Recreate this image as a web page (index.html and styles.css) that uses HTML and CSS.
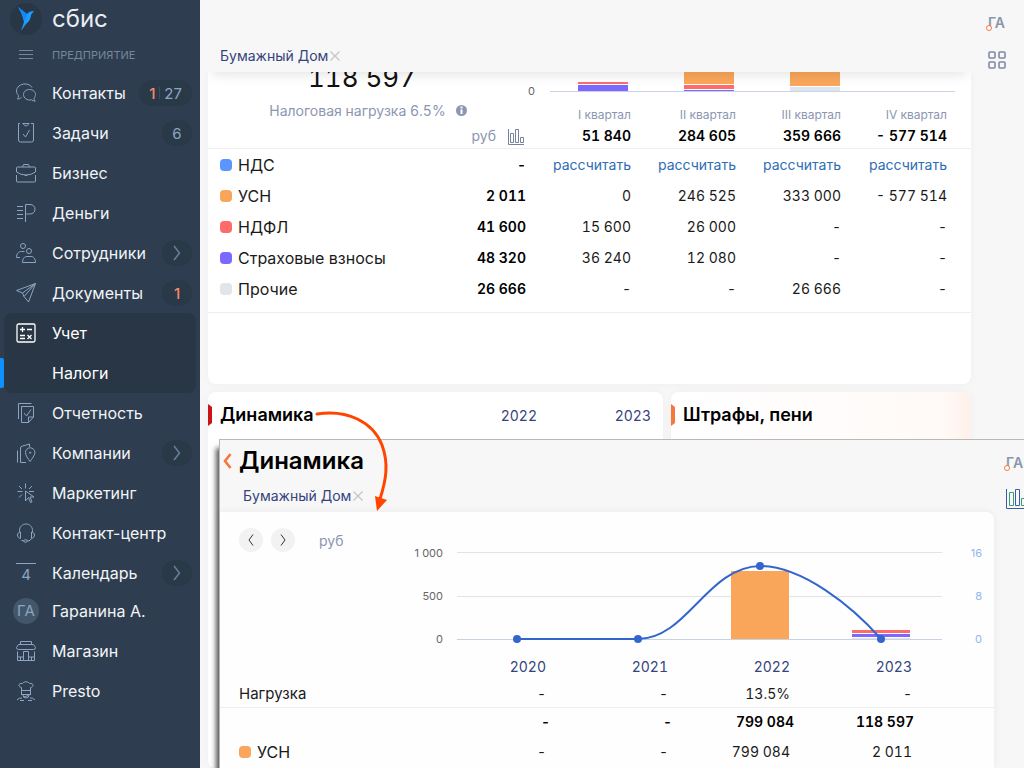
FILE: index.html
```html
<!DOCTYPE html>
<html lang="ru">
<head>
<meta charset="utf-8">
<meta name="viewport" content="width=device-width, initial-scale=1">
<title>СБИС — Налоги</title>
<link rel="stylesheet" href="styles.css">
</head>
<body>
<div class="app">
  <aside class="sidebar">
    <div class="brand">
      <span class="brand-mark">
        <svg width="20" height="26" viewBox="0 0 20 26"><path fill="#1e9bff" d="M2 1 11 8Q13 5 18 5L15 9Q15 14 10 18L5 25 8 16Q6 7 2 1Z"/><path fill="#0d8af8" d="M2 1 11 8 9 15Q6 7 2 1Z"/></svg>
      </span>
      <span class="brand-name">сбис</span>
    </div>
    <div class="section">
      <button class="menu-btn" aria-label="Меню"><svg class="ico" width="20" height="20" viewBox="0 0 20 20"><path d="M3 5.500h14M3 9.500h14M3 13.500h14"/></svg></button>
      <span class="section-name">ПРЕДПРИЯТИЕ</span>
    </div>
    <nav class="nav">
      <a class="item" href="#"><svg class="ico" width="20" height="20" viewBox="0 0 20 20"><path d="M16 4.500C14.500 2 12 1 9 1 4.500 1 .5 4 .5 8c0 2 1 3.500 2 4.500 0 1.500-.3 2.500-1 3.500 1.500 0 3-.5 4-1.500"/><path d="M13.500 6.500c3.500 0 6 2.200 6 5 0 1.500-.7 2.800-1.500 3.700 0 1.300.4 2.300 1.200 3-1.500 0-2.700-.5-3.700-1.400-4.500 1-8-1.700-8-5.300 0-2.800 2.500-5 6-5z"/></svg><span class="label">Контакты</span><span class="badge"><b class="hot">1</b><i class="bar"></i>27</span></a>
      <a class="item" href="#"><svg class="ico" width="20" height="20" viewBox="0 0 20 20"><path d="M4 .5H2.500v16.500q0 2 2 2h11q2 0 2-2V.5H15M6.500 .5h7M7.500 .5c0 3 5 3 5 0M7 11l2.500 3 4-7"/></svg><span class="label">Задачи</span><span class="badge">6</span></a>
      <a class="item" href="#"><svg class="ico" width="20" height="20" viewBox="0 0 20 20"><path d="M.5 9V5q0-1 1-1h17q1 0 1 1v4q-4 3-9.500 3T.5 9zM6.500 4 7.500 1.500h5l1 2.500M.5 12v6q0 1 1 1h17q1 0 1-1v-6M8.500 12q1.500 1.500 3 0"/></svg><span class="label">Бизнес</span></a>
      <a class="item" href="#"><svg class="ico" width="20" height="20" viewBox="0 0 20 20"><path d="M9.500 19V1.500H14c3 0 5 2 5 4.700S17 11 14 11H9.500M1 3.500h6M1 7.500h6M1 11.500h6M1 15.500h6"/></svg><span class="label">Деньги</span></a>
      <a class="item" href="#"><svg class="ico" width="20" height="20" viewBox="0 0 20 20"><circle cx="7" cy="3" r="2.500"/><circle cx="13" cy="8" r="2.500"/><path d="M.5 14.500H4M.5 14.500c0-4 2-6 5-6h3M6.500 19.500h13c0-4-2-6-4.500-6h-4c-2.500 0-4.500 2-4.500 6z"/></svg><span class="label">Сотрудники</span><span class="badge arrow"><svg width="8" height="16" viewBox="0 0 8 16"><path d="M1 1l5.500 7L1 15"/></svg></span></a>
      <a class="item" href="#"><svg class="ico" width="20" height="20" viewBox="0 0 20 20"><path d="M.5 7.500 19.500 .5 12.500 19 8 13.500 6.500 10zM19.500 .5 6.500 10M19.500 .5 8 13.500"/></svg><span class="label">Документы</span><span class="badge"><b class="hot">1</b></span></a>
      <div class="group">
        <a class="item on" href="#"><svg class="ico" width="20" height="20" viewBox="0 0 20 20"><rect x="1" y="1" width="18" height="18" rx="1.500"/><path d="M4 6.500h5M6.500 4v5M11 6.500h5M4 12.500h5M4 15.500h5M11.500 12l4 4M15.500 12l-4 4"/></svg><span class="label">Учет</span></a>
        <a class="item on current" href="#" aria-current="page"><span class="ico-gap"></span><span class="label">Налоги</span></a>
      </div>
      <a class="item" href="#"><svg class="ico" width="20" height="20" viewBox="0 0 20 20"><path d="M2.500 16V.5h13M5.500 3.500h12V14l-5 5.500h-7zM12.500 19.500V14h5M8 10l2.500 3L15 6.500"/></svg><span class="label">Отчетность</span></a>
      <a class="item" href="#"><svg class="ico" width="20" height="20" viewBox="0 0 20 20"><path d="M1.500 19.500v-12M10 19.500H4.500V5q0-1.500 1.500-1.800L13.500 1v3M14 18.500c-2-3-4.500-6-4.500-9a4.700 4.700 0 0 1 9.400 0c0 3-2.900 6-4.900 9z"/><circle cx="14.200" cy="9.700" r=".7"/></svg><span class="label">Компании</span><span class="badge arrow"><svg width="8" height="16" viewBox="0 0 8 16"><path d="M1 1l5.500 7L1 15"/></svg></span></a>
      <a class="item" href="#"><svg class="ico" width="20" height="20" viewBox="0 0 20 20"><path d="M9.500 .5v5M3 3l3 3M16 3l-3 3M1.500 8.500h5M18 8.500h-5M3 14.500l3-3M9.500 8v10l3-3.500 2 5 1.500-.7-2-4.800h4z"/></svg><span class="label">Маркетинг</span></a>
      <a class="item" href="#"><svg class="ico" width="20" height="20" viewBox="0 0 20 20"><path d="M3.500 9V7.500C3.500 3.500 6.500 1 10 1s6.500 2.500 6.500 6.500V9M4.500 9v6.500C2.500 15 1.500 13.500 1.500 12s1-2.500 3-3zM15.500 9v6.500c2-.5 3-2 3-3.500s-1-2.500-3-3zM15.500 15.500q-1 2.500-4 2.500"/><ellipse cx="9.500" cy="18" rx="2" ry="1.200"/><path d="M5.500 17.500h2"/></svg><span class="label">Контакт-центр</span></a>
      <a class="item short" href="#"><span class="day">4</span><span class="label">Календарь</span><span class="badge arrow"><svg width="8" height="16" viewBox="0 0 8 16"><path d="M1 1l5.500 7L1 15"/></svg></span></a>
      <a class="item" href="#"><span class="avatar">ГА</span><span class="label">Гаранина А.</span></a>
      <a class="item" href="#"><svg class="ico" width="20" height="20" viewBox="0 0 20 20"><path d="M4.500 3.500v-3h11v3M2.500 3.500h15l2 3q0 2-2 2h-15q-2 0-2-2zM1.500 10.500v9h17v-9M7.500 19v-8.500h5V19M1.500 16h6M12.500 16h6M4.500 16v3M15.500 16v3"/></svg><span class="label">Магазин</span></a>
      <a class="item" href="#"><svg class="ico" width="20" height="20" viewBox="0 0 20 20"><path d="M5.500 13V6.500C1.500 6 2.500 1.500 6.500 2.500 8 .2 12 .2 13.500 2.500c4-1 5 3.500 1 4V13M5.500 9.500h9M5 13.500h10M7 14q0 3 3 3t3-3M7.500 16l5-1.500M1 19q2-2.500 5-2M19 19q-2-2.500-5-2M4 19.500h4M12 19.500h4"/></svg><span class="label">Presto</span></a>
    </nav>
  </aside>

  <div class="page">
    <main class="content">
      <header class="top">
        <span class="org">Бумажный Дом<button class="clear" aria-label="Сбросить"><svg width="10" height="10" viewBox="0 0 10 10"><path d="M.5 .5l9 9M9.500 .5l-9 9"/></svg></button></span>
      </header>

      <section class="card taxes">
        <div class="summary">
          <div class="total">118 597</div>
          <svg class="bars" width="428" height="24" viewBox="0 0 428 24">
            <text class="axis" x="0" y="23">0</text>
            <path stroke="#c9d2e8" d="M22 19.500h405"/>
            <path fill="#ff6b6b" d="M50 10h50v2H50zM156 13h50v4h-50z"/>
            <path fill="#7b68ff" d="M50 13h50v6H50zM156 18h50v1h-50z"/>
            <path fill="#faa65a" d="M156 0h50v12h-50zM262 0h50v14h-50z"/>
            <path fill="#dfe5ea" d="M262 15h50v4h-50z"/>
          </svg>
        </div>
        <table class="tax-table">
          <colgroup><col><col class="c-total"><col class="c-q"><col class="c-q"><col class="c-q"><col class="c-q"></colgroup>
          <thead>
            <tr class="quarters"><th colspan="2" class="load">Налоговая нагрузка 6.5%<svg width="11" height="11" viewBox="0 0 11 11"><circle cx="5.500" cy="5.500" r="5.500" fill="#8c96b2"/><path stroke="#fff" stroke-width="2" d="M5.500 1.500v2M5.500 4.500v4.500"/></svg></th><th>I квартал</th><th>II квартал</th><th>III квартал</th><th>IV квартал</th></tr>
            <tr class="sums"><th colspan="2" class="unit">руб<svg width="16" height="16" viewBox="0 0 16 16"><path fill="none" stroke="#77829c" d="M.5 0v15.500H16M2.500 13.500v-9h3v9zM7.500 13.500V.5h3v13zM12.500 13.500v-5h3v5z"/></svg></th><th>51 840</th><th>284 605</th><th>359 666</th><th>- 577 514</th></tr>
          </thead>
          <tbody>
            <tr><th><i class="dot blue"></i>НДС</th><td>-</td><td><a href="#">рассчитать</a></td><td><a href="#">рассчитать</a></td><td><a href="#">рассчитать</a></td><td><a href="#">рассчитать</a></td></tr>
            <tr><th><i class="dot orange"></i>УСН</th><td>2 011</td><td>0</td><td>246 525</td><td>333 000</td><td>- 577 514</td></tr>
            <tr><th><i class="dot red"></i>НДФЛ</th><td>41 600</td><td>15 600</td><td>26 000</td><td>-</td><td>-</td></tr>
            <tr><th><i class="dot violet"></i>Страховые взносы</th><td>48 320</td><td>36 240</td><td>12 080</td><td>-</td><td>-</td></tr>
            <tr><th><i class="dot gray"></i>Прочие</th><td>26 666</td><td>-</td><td>-</td><td>26 666</td><td>-</td></tr>
          </tbody>
        </table>
      </section>

      <div class="row">
        <section class="card panel">
          <h2>Динамика</h2><span class="year">2022</span><span class="year">2023</span>
        </section>
        <section class="card panel fines">
          <h2>Штрафы, пени</h2>
        </section>
      </div>
    </main>

    <aside class="rail">
      <button class="who"><i class="ring"></i>ГА</button>
      <button aria-label="Разделы"><svg width="18" height="18" viewBox="0 0 18 18"><g fill="none" stroke="#7f8aa3" stroke-width="1.600"><rect x="1" y="1" width="6" height="6" rx="1"/><rect x="11" y="1" width="6" height="6" rx="1"/><rect x="1" y="11" width="6" height="6" rx="1"/><rect x="11" y="11" width="6" height="6" rx="1"/></g></svg></button>
    </aside>
  </div>

  <section class="window" aria-label="Динамика">
    <div class="win-main">
      <header class="win-head">
        <div class="win-title"><button aria-label="Назад"><svg width="9" height="16" viewBox="0 0 9 16"><path fill="none" stroke="#f5783f" stroke-width="2.600" d="M7.500 1 2 8 7.500 15"/></svg></button><h1>Динамика</h1></div>
        <span class="org">Бумажный Дом<button class="clear" aria-label="Сбросить"><svg width="10" height="10" viewBox="0 0 10 10"><path d="M.5 .5l9 9M9.500 .5l-9 9"/></svg></button></span>
      </header>
      <div class="win-card">
        <div class="graph">
          <div class="tools">
            <button class="round" aria-label="Предыдущий"><svg width="6" height="12" viewBox="0 0 6 12"><path d="M5 .5 1 6l4 5.500"/></svg></button>
            <button class="round" aria-label="Следующий"><svg width="6" height="12" viewBox="0 0 6 12"><path d="M1 .5 5 6l-4 5.500"/></svg></button>
            <span class="unit-name">руб</span>
          </div>
          <svg class="plot" width="580" height="118" viewBox="0 0 580 118">
            <path stroke="#e3e3e3" d="M45 20.500h485M45 64.500h485"/>
            <path stroke="#c9d2e0" d="M45 107.500h485"/>
            <g class="axis" text-anchor="end"><text x="31" y="25">1 000</text><text x="31" y="68">500</text><text x="31" y="111">0</text></g>
            <g class="axis light" text-anchor="end"><text x="570" y="25">16</text><text x="570" y="68">8</text><text x="570" y="111">0</text></g>
            <path fill="#faa65a" d="M319 39h58v68h-58z"/>
            <path fill="#ff6b6b" d="M440 98h58v3h-58z"/>
            <path fill="#7b68ff" d="M440 102h58v3h-58z"/>
            <path fill="#dfe5ea" d="M440 106h58v1h-58z"/>
            <path fill="none" stroke="#3366cc" stroke-width="2" d="M105 107H226C275 107 295 35 348 34C390 34 440 74 469 107"/>
            <g fill="#3366cc"><circle cx="105" cy="107" r="4"/><circle cx="226" cy="107" r="4"/><circle cx="348" cy="34" r="4"/><circle cx="469" cy="107" r="4"/></g>
          </svg>
        </div>
        <table class="dyn-table">
          <colgroup><col><col class="c-y"><col class="c-y"><col class="c-y"><col class="c-y"></colgroup>
          <thead><tr><td></td><th>2020</th><th>2021</th><th>2022</th><th>2023</th></tr></thead>
          <tbody>
            <tr class="load-row"><th>Нагрузка</th><td>-</td><td>-</td><td>13.5%</td><td>-</td></tr>
            <tr class="sum-row"><th></th><td>-</td><td>-</td><td>799 084</td><td>118 597</td></tr>
            <tr class="tax-row"><th><i class="dot orange"></i>УСН</th><td>-</td><td>-</td><td>799 084</td><td>2 011</td></tr>
          </tbody>
        </table>
      </div>
    </div>
    <div class="win-rail">
      <button class="who"><i class="ring"></i>ГА</button>
      <button aria-label="График"><svg width="22" height="20" viewBox="0 0 22 20"><g fill="none"><path stroke="#3c5aa8" d="M.5 0v19.500H22"/><path stroke="#3c5aa8" d="M9.500 16.500v-16h4v16z"/><path stroke="#35a070" d="M3.500 16.500v-13h4v13zM15.500 16.500v-7h4v7z"/></g></svg></button>
    </div>
  </section>

  <svg class="pointer" width="76" height="104" viewBox="0 0 76 104"><path fill="none" stroke="#ff4500" stroke-width="3" stroke-linecap="round" d="M2 6C32 1 58 14 67 37C74 56 71 72 65 91"/><path fill="#ff4500" d="M60 88 72 92 62 103z"/></svg>
</div>
</body>
</html>
```
FILE: styles.css
```css
* { box-sizing: border-box; }
body {
  margin: 0;
  font-family: Inter, "Liberation Sans", sans-serif;
  font-size: 14px;
  color: #1a1a1a;
  background: #f7f7f7;
}
button { border: 0; padding: 0; background: none; font: inherit; display: flex; align-items: center; justify-content: center; }
a { text-decoration: none; }
h1, h2 { margin: 0; font-weight: 600; color: #000; }
svg { display: block; flex: none; }

.app { position: relative; display: flex; height: 100vh; overflow: hidden; }

.sidebar { flex: none; width: 200px; background: #2e3e50; color: #e9edf1; }
.brand { display: flex; align-items: center; gap: 10px; height: 38px; padding-left: 10px; }
.brand-mark { width: 32px; height: 32px; border-radius: 50%; background: #283645; display: flex; align-items: center; justify-content: center; }
.brand-name { font-size: 24px; line-height: 32px; }
.section { display: flex; align-items: center; gap: 16px; height: 35px; padding: 0 0 2px 16px; font-size: 11px; color: #76869c; }
.ico { fill: none; stroke: #8ba5c2; stroke-width: 1; }
.menu-btn .ico { stroke: #76869c; }
.item { display: flex; align-items: center; gap: 16px; height: 40px; padding: 0 8px 0 16px; font-size: 16px; color: #f1f4f7; }
.short { height: 38px; padding-top: 2px; }
.label { flex: 1; white-space: nowrap; }
.item .badge { margin-left: -16px; }
.badge { display: flex; align-items: center; justify-content: center; min-width: 30px; height: 26px; padding: 0 10px; border-radius: 13px; background: #2a3948; color: #8ba5c2; font-size: 15px; }
.arrow { padding: 0; }
.arrow path { fill: none; stroke: #66809c; stroke-width: 1.500; }
.hot { font-weight: 500; color: #f58a68; }
.bar { width: 1px; height: 12px; margin: 0 4px; background: #3c4d60; }
.group { margin: 0 4px; border-radius: 8px; background: #283645; }
.group .item { padding-left: 12px; color: #fff; }
.group .ico { stroke: #fff; stroke-width: 1.300; }
.ico-gap { width: 20px; }
.current { position: relative; }
.current::before { content: ""; position: absolute; left: -4px; top: 5px; width: 4px; height: 30px; border-radius: 0 2px 2px 0; background: #1090ff; }
.day { width: 20px; height: 20px; border-top: 1px solid #8ba5c2; text-align: center; line-height: 22px; font-size: 15px; color: #8ba5c2; }
.avatar { width: 26px; height: 26px; margin: 0 -3px; border-radius: 50%; background: #43576b; color: #8ba5c2; text-align: center; line-height: 26px; font-size: 15px; }

.page { flex: 1; display: flex; min-width: 0; }
.content { flex: 1; min-width: 0; padding-left: 8px; }
.top { position: relative; height: 72px; display: flex; align-items: flex-end; padding: 0 12px 6px; background: #f7f7f7; box-shadow: 0 6px 12px -4px rgba(0, 0, 0, 0.12); clip-path: inset(0 0 -16px 0); z-index: 1; }
.org { display: flex; align-items: center; gap: 2px; line-height: 20px; color: #34437c; }
.clear path { stroke: #c4c4c4; stroke-width: 1.200; }

.card { background: #fff; border-radius: 8px; box-shadow: 0 0 8px rgba(0, 0, 0, 0.04); }
.taxes { height: 312px; border-radius: 0 0 8px 8px; }
.summary { display: flex; justify-content: space-between; align-items: flex-end; height: 24px; padding: 0 15px 0 12px; }
.total { flex: 1; padding-right: 24px; text-align: center; font-size: 26px; line-height: 36px; color: #111; }
.total, .year, table { font-variant-numeric: tabular-nums; }
.axis { font-size: 11px; fill: #666; }
.light { fill: #8fb8ea; }
.bars { overflow: visible; }

table { width: 100%; border-collapse: collapse; table-layout: fixed; }
th, td { padding: 0; font-weight: 400; text-align: right; white-space: nowrap; }
.c-total { width: 108px; }
.c-q { width: 105px; }
.tax-table th:first-child { padding-left: 12px; }
.tax-table th:last-child, .tax-table td:last-child { padding-right: 24px; }
.tax-table col:last-child { width: 130px; }
.quarters th { height: 28px; padding-top: 10px; font-size: 12px; line-height: 18px; color: #8c96b2; }
.quarters .load { padding: 6px 10px 4px 0; text-align: center; font-size: 14px; }
.load svg { display: inline-block; margin-left: 10px; vertical-align: 0; }
.sums th { height: 24px; font-weight: 600; color: #000; border-bottom: 1px solid #eee; }
.sums .unit { font-weight: 400; color: #8c96b2; }
.unit svg { display: inline-block; margin: 0 2px 0 12px; vertical-align: -4px; }
.tax-table tbody tr { height: 31px; }
.tax-table tbody tr > * { padding-top: 2px; }
.tax-table tbody tr:last-child { height: 40px; }
.tax-table tbody tr:last-child > * { padding-bottom: 8px; border-bottom: 1px solid #eee; }
tbody th { text-align: left; font-size: 16px; }
.tax-table td:nth-child(2) { font-weight: 600; color: #000; }
.tax-table a { color: #2f6db5; }
.dot { display: inline-block; width: 12px; height: 12px; margin-right: 6px; border-radius: 4px; }
.blue { background: #5b95ff; }
.orange { background: #faa65a; }
.red { background: #ff6b6b; }
.violet { background: #7b68ff; }
.gray { background: #dfe5ea; }

.row { display: grid; grid-template-columns: 455fr 300fr; gap: 8px; margin-top: 8px; height: 376px; }
.panel { position: relative; display: flex; align-items: flex-start; padding: 12px; line-height: 22px; }
.panel h2 { flex: 1; font-size: 18px; }
.panel::before { content: ""; position: absolute; left: 0; top: 12px; width: 4px; height: 22px; background: #c81414; clip-path: polygon(0 0, 100% 14%, 100% 86%, 0 100%); }
.panel.fines::before { background: #f5783f; }
.fines { background: linear-gradient(90deg, #fff 0%, #fffaf8 90%, #fff0ea 100%); }
.year { width: 114px; text-align: right; line-height: 24px; color: #34437c; }

.rail { flex: none; width: 53px; display: flex; flex-direction: column; align-items: center; gap: 17px; padding: 12px 2px 0 0; }
.who { position: relative; font-weight: 600; line-height: 22px; color: #8c96aa; }
.ring { position: absolute; left: -2px; bottom: 3px; width: 6px; height: 6px; border: 1px solid #f5783f; border-radius: 50%; background: #fff; }

.window { position: absolute; left: 219px; right: 0; top: 439px; bottom: 0; display: flex; border: solid #b8b8b8; border-width: 1px 0 0 1px; background: #f7f7f7; box-shadow: -3px 9px 5px rgba(0, 0, 0, 0.650); z-index: 2; }
.win-main { flex: 1; min-width: 0; display: flex; flex-direction: column; }
.win-head { padding: 4px 0 6px 3px; }
.win-title { display: flex; align-items: center; gap: 7px; height: 34px; }
.win-title h1 { font-size: 24px; line-height: 34px; }
.win-head .org { margin-left: 20px; padding-top: 8px; }
.win-card { flex: 1; background: #fefefe; border-radius: 0 8px 0 0; box-shadow: 0 0 8px rgba(0, 0, 0, 0.060); }
.graph { display: flex; justify-content: space-between; padding: 20px 2px 0 19px; }
.tools { display: flex; align-items: center; gap: 8px; height: 16px; }
.round { width: 24px; height: 24px; border-radius: 50%; background: #f2f2f2; }
.round path { fill: none; stroke: #333; }
.unit-name { margin-left: 16px; color: #8c96b2; }
.c-y { width: 122px; }
.dyn-table col:last-child { width: 200px; }
.dyn-table th, .dyn-table td { padding-right: 4px; }
.dyn-table th:last-child, .dyn-table td:last-child { padding-right: 82px; }
.dyn-table tbody th { padding-left: 19px; }
.dyn-table thead th { height: 31px; padding-top: 2px; color: #34437c; }
.load-row { height: 26px; border-bottom: 1px solid #eee; }
.dyn-table .load-row th { font-size: 15px; }
.sum-row { height: 29px; color: #000; }
.dyn-table .sum-row td { padding-right: 0; font-weight: 600; }
.dyn-table .sum-row td:last-child { padding-right: 80px; }
.tax-row { height: 31px; }
.win-rail { flex: none; width: 30px; display: flex; flex-direction: column; align-items: flex-start; gap: 15px; padding: 12px 0 0 12px; overflow: hidden; }

.pointer { position: absolute; left: 315px; top: 408px; z-index: 3; }
```
